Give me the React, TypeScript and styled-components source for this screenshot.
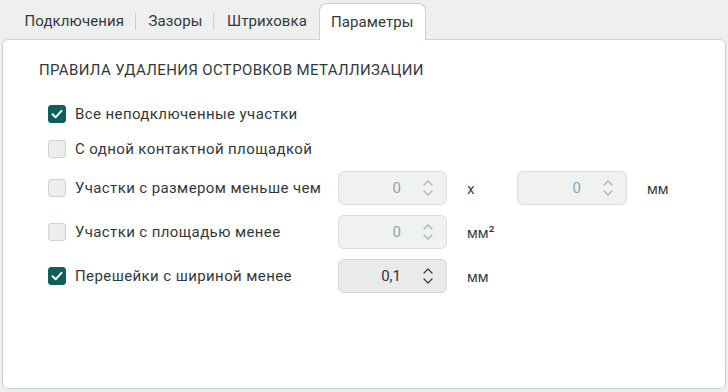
import React from "react";
import styled, { createGlobalStyle } from "styled-components";

const GlobalStyle = createGlobalStyle`
  html, body {
    margin: 0;
    padding: 0;
    background: #eef0ef;
    font-family: Roboto, "Liberation Sans", sans-serif;
    color: #2e3436;
  }
`;

const Page = styled.div`
  width: 728px;
  height: 392px;
  box-sizing: border-box;
  padding: 3px 2px 3px 2px;
  display: flex;
  flex-direction: column;
`;

const TabBar = styled.div`
  display: flex;
  align-items: stretch;
  height: 36px;
  padding-left: 10px;
  position: relative;
  z-index: 1;
`;

const Tab = styled.div<{ $active?: boolean; $sep?: boolean }>`
  display: flex;
  align-items: center;
  padding: 0 12px 0 12.5px;
  font-size: 15px;
  letter-spacing: 0.1px;
  color: #33393b;
  position: relative;
  box-sizing: border-box;
  ${(p) =>
    p.$active
      ? `
    background: #fff;
    border: 1px solid #c9d5d2;
    border-bottom: none;
    border-radius: 8px 8px 0 0;
    padding: 0 11px 0 11px;
    margin-bottom: -1px;
    height: 37px;
  `
      : ""}
  ${(p) =>
    p.$sep
      ? `
    &::after {
      content: "";
      position: absolute;
      right: 0;
      top: 10px;
      bottom: 9px;
      width: 1px;
      background: #c9d0ce;
    }
  `
      : ""}
`;

const Panel = styled.div`
  flex: 1;
  background: #fff;
  border: 1px solid #c9d5d2;
  border-radius: 6px;
  padding: 21px 0 0 36px;
`;

const Heading = styled.div`
  font-size: 15px;
  color: #33393b;
  letter-spacing: 0.35px;
  margin-bottom: 22px;
`;

const Rows = styled.div`
  display: flex;
  flex-direction: column;
  gap: 10px;
  padding-left: 9px;
`;

const Row = styled.div`
  display: flex;
  align-items: center;
  min-height: 25px;
`;

const CheckLabel = styled.label`
  display: flex;
  align-items: center;
  width: 290px;
  font-size: 15px;
  letter-spacing: 0.4px;
  color: #33393b;
`;

const Box = styled.span<{ $checked?: boolean }>`
  width: 18px;
  height: 18px;
  box-sizing: border-box;
  border-radius: 3px;
  margin-right: 9px;
  display: inline-flex;
  align-items: center;
  justify-content: center;
  background: ${(p) => (p.$checked ? "#0e5e5b" : "#eceeed")};
  border: 1px solid ${(p) => (p.$checked ? "#0e5e5b" : "#cdd5d3")};
`;

const NumberBox = styled.div<{ $disabled?: boolean; $w?: number }>`
  width: ${(p) => p.$w ?? 109}px;
  height: 34px;
  box-sizing: border-box;
  border-radius: 6px;
  border: 1px solid ${(p) => (p.$disabled ? "#d9dfdd" : "#d3d9d7")};
  background: ${(p) => (p.$disabled ? "#f0f2f1" : "#e9ebea")};
  display: flex;
  align-items: center;
  justify-content: flex-end;
  padding-right: 12px;
  font-size: 15px;
  color: ${(p) => (p.$disabled ? "#8da3ac" : "#2e3436")};
`;

const Value = styled.span`
  margin-right: 21px;
`;

const Unit = styled.span<{ $w?: number }>`
  font-family: Inter, Roboto, sans-serif;
  font-size: 14px;
  color: #33393b;
  padding-left: 20px;
  width: ${(p) => (p.$w ? `${p.$w}px` : "auto")};
  box-sizing: border-box;
`;

function Check() {
  return (
    <svg width="14" height="14" viewBox="0 0 14 14">
      <path d="M2.5 7.3 L5.6 10.3 L11.5 3.8" fill="none" stroke="#fff" strokeWidth="2" strokeLinecap="round" strokeLinejoin="round" />
    </svg>
  );
}

function Spin({ color }: { color: string }) {
  return (
    <svg width="12" height="20" viewBox="0 0 12 20">
      <path d="M2 7 L6 3 L10 7 M2 13 L6 17 L10 13" fill="none" stroke={color} strokeWidth="1.3" strokeLinecap="round" strokeLinejoin="round" />
    </svg>
  );
}

function NumberField({ value, disabled, w }: { value: string; disabled?: boolean; w?: number }) {
  return (
    <NumberBox $disabled={disabled} $w={w}>
      <Value>{value}</Value>
      <Spin color={disabled ? "#a9b5b8" : "#3a4144"} />
    </NumberBox>
  );
}

function Option({ label, checked }: { label: string; checked?: boolean }) {
  return (
    <CheckLabel>
      <Box $checked={checked}>{checked && <Check />}</Box>
      {label}
    </CheckLabel>
  );
}

export default function App() {
  return (
    <>
      <GlobalStyle />
      <Page>
        <TabBar>
          <Tab $sep>Подключения</Tab>
          <Tab $sep>Зазоры</Tab>
          <Tab>Штриховка</Tab>
          <Tab $active>Параметры</Tab>
        </TabBar>
        <Panel>
          <Heading>ПРАВИЛА УДАЛЕНИЯ ОСТРОВКОВ МЕТАЛЛИЗАЦИИ</Heading>
          <Rows>
            <Row>
              <Option label="Все неподключенные участки" checked />
            </Row>
            <Row>
              <Option label="С одной контактной площадкой" />
            </Row>
            <Row>
              <Option label="Участки с размером меньше чем" />
              <NumberField value="0" disabled />
              <Unit $w={70}>x</Unit>
              <NumberField value="0" disabled w={110} />
              <Unit>мм</Unit>
            </Row>
            <Row>
              <Option label="Участки с площадью менее" />
              <NumberField value="0" disabled />
              <Unit>мм²</Unit>
            </Row>
            <Row>
              <Option label="Перешейки с шириной менее" checked />
              <NumberField value="0,1" />
              <Unit>мм</Unit>
            </Row>
          </Rows>
        </Panel>
      </Page>
    </>
  );
}
